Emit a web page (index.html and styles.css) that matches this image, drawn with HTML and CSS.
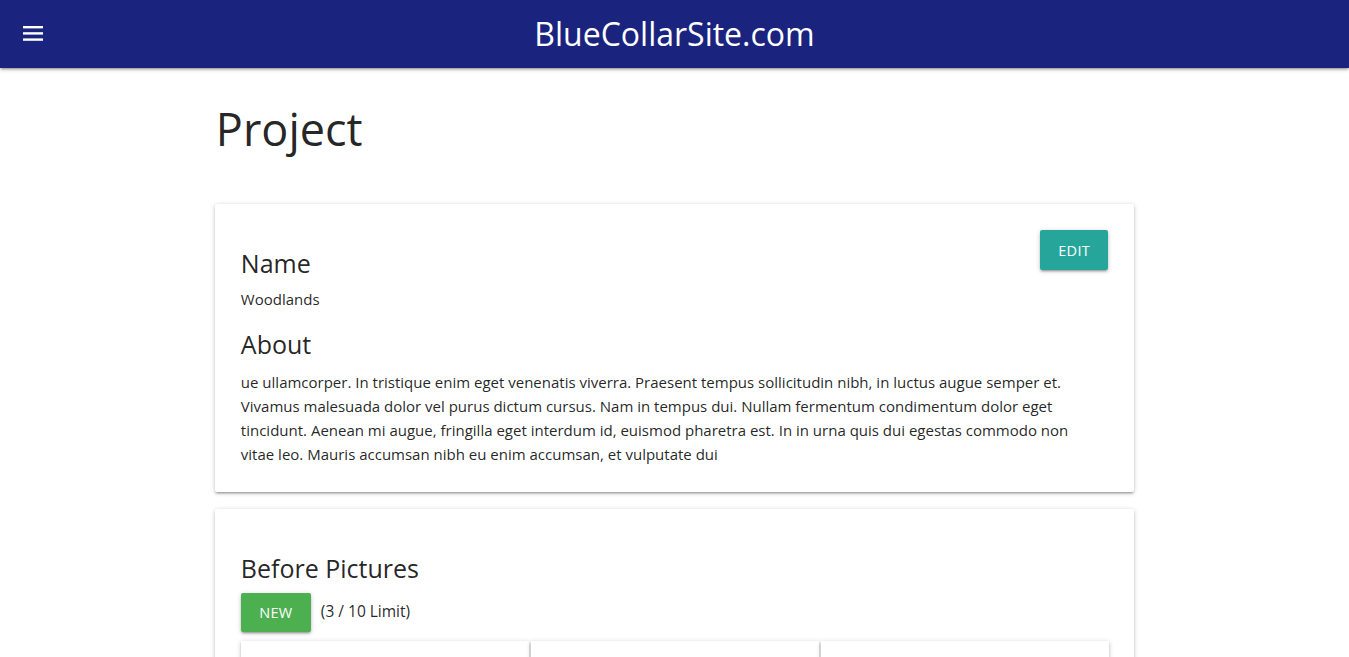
FILE: index.html
```html
<!DOCTYPE html>
<html>
<head>
<meta charset="utf-8">
<link rel="stylesheet" href="styles.css">
</head>
<body>
<header class="topbar">
  <button class="menu-btn" aria-label="menu">
    <svg width="20" height="15" viewBox="0 0 20 15"><rect x="0" y="0" width="20" height="2.4" fill="#fff"/><rect x="0" y="6.2" width="20" height="2.4" fill="#fff"/><rect x="0" y="12.4" width="20" height="2.4" fill="#fff"/></svg>
  </button>
  <div class="brand">BlueCollarSite.com</div>
</header>
<main class="container">
  <h2 class="page-title">Project</h2>
  <section class="card">
    <div class="card-content">
      <button class="btn btn-edit">Edit</button>
      <h5 class="label">Name</h5>
      <p class="value">Woodlands</p>
      <h5 class="label">About</h5>
      <p class="value about">ue ullamcorper. In tristique enim eget venenatis viverra. Praesent tempus sollicitudin nibh, in luctus augue semper et. Vivamus malesuada dolor vel purus dictum cursus. Nam in tempus dui. Nullam fermentum condimentum dolor eget tincidunt. Aenean mi augue, fringilla eget interdum id, euismod pharetra est. In in urna quis dui egestas commodo non vitae leo. Mauris accumsan nibh eu enim accumsan, et vulputate dui</p>
    </div>
  </section>
  <section class="card">
    <div class="card-content pics">
      <h5 class="label">Before Pictures</h5>
      <div class="actions">
        <button class="btn btn-new">New</button>
        <span class="limit">(3 / 10 Limit)</span>
      </div>
      <div class="pic-grid">
        <div class="pic-card"></div>
        <div class="pic-card"></div>
        <div class="pic-card"></div>
      </div>
    </div>
  </section>
</main>
</body>
</html>
```
FILE: styles.css
```css
* { box-sizing: border-box; }
html, body { margin: 0; padding: 0; }
body {
  font-family: "Open Sans", "Noto Sans", sans-serif;
  color: rgba(0,0,0,0.87);
  background: #fff;
  font-size: 15px;
  overflow: hidden;
}
.topbar {
  height: 68px;
  background: #1a237e;
  display: flex;
  align-items: center;
  justify-content: center;
  position: relative;
  box-shadow: 0 2px 2px 0 rgba(0,0,0,.14), 0 3px 1px -2px rgba(0,0,0,.12), 0 1px 5px 0 rgba(0,0,0,.2);
}
.menu-btn {
  position: absolute;
  left: 23px;
  top: 26px;
  background: none;
  border: 0;
  padding: 0;
  width: 20px;
  height: 15px;
  display: block;
}
.menu-btn svg { display: block; }
.brand {
  color: #fff;
  font-size: 32px;
  line-height: 68px;
  letter-spacing: 0;
}
.container {
  width: 70%;
  margin: 0 auto;
  padding: 0 12.5px;
}
.page-title {
  font-weight: 400;
  font-size: 45px;
  line-height: 1.1;
  margin: 36px 0 0;
  padding-left: 1px;
  height: 100px;
}
.card {
  background: #fff;
  border-radius: 2px;
  margin-bottom: 17px;
  box-shadow: 0 2px 2px 0 rgba(0,0,0,.14), 0 3px 1px -2px rgba(0,0,0,.12), 0 1px 5px 0 rgba(0,0,0,.2);
}
.card-content {
  padding: 26px 26px 26px 26px;
}
.btn {
  border: 0;
  border-radius: 2px;
  color: #fff;
  font-family: inherit;
  font-size: 14.5px;
  text-transform: uppercase;
  letter-spacing: 0.3px;
  height: 40px;
  padding: 0 17px;
  box-shadow: 0 2px 2px 0 rgba(0,0,0,.14), 0 3px 1px -2px rgba(0,0,0,.12), 0 1px 5px 0 rgba(0,0,0,.2);
}
.btn-edit {
  float: right;
  background: #26a69a;
  width: 68px;
  padding: 0;
}
.label {
  font-weight: 400;
  font-size: 25px;
  line-height: 30px;
  margin: 18px 0 0;
}
.value {
  margin: 9px 0 10px;
  line-height: 24px;
  font-size: 15px;
}
.value.about { margin-top: 11px; max-width: 858px; }
.value:last-child { margin-bottom: 0; }
.pics { padding-top: 44px; padding-bottom: 0; }
.pics .label { margin-top: 0; }
.actions {
  display: flex;
  align-items: center;
  gap: 10px;
  margin-top: 10px;
}
.btn-new {
  background: #4caf50;
  width: 70px;
  height: 39px;
  padding: 0;
}
.limit { font-size: 15.5px; margin-top: -4px; }
.pic-grid {
  display: grid;
  grid-template-columns: repeat(3, 1fr);
  gap: 2px;
  margin: 9px -1px 0 0;
}
.pic-card {
  height: 120px;
  background: #fff;
  box-shadow: 0 2px 2px 0 rgba(0,0,0,.14), 0 3px 1px -2px rgba(0,0,0,.12), 0 1px 5px 0 rgba(0,0,0,.2);
}
```
